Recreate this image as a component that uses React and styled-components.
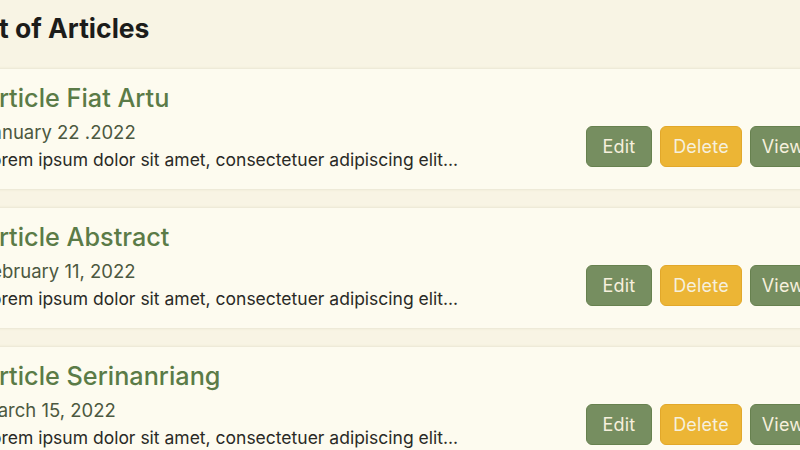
import React from "react";
import styled, { createGlobalStyle } from "styled-components";

const Global = createGlobalStyle`
  html, body { margin: 0; padding: 0; background: #f8f4e4; overflow: hidden; }
  body { font-family: Inter, "Noto Sans", "Liberation Sans", sans-serif; }
`;

const Page = styled.div`
  width: 800px;
  height: 450px;
  overflow: hidden;
  background: #f8f4e4;
`;

const Container = styled.div`
  width: 873px;
  margin-left: -40px;
  padding-top: 12px;
  display: flex;
  flex-direction: column;
`;

const Heading = styled.h1`
  margin: 0 0 23px 2px;
  font-size: 26.5px;
  line-height: 33px;
  font-weight: 700;
  color: #1c1c1a;
`;

const List = styled.div`
  display: flex;
  flex-direction: column;
  gap: 17px;
`;

const Card = styled.div`
  height: 122px;
  box-sizing: border-box;
  background: #fdfbef;
  border: 1px solid #eeead8;
  border-radius: 3px;
  box-shadow: 0 0 3px rgba(120, 110, 70, 0.08);
  padding: 14px 16px 0 20px;
  display: flex;
  align-items: flex-start;
  justify-content: space-between;
`;

const Info = styled.div`
  display: flex;
  flex-direction: column;
`;

const Title = styled.h2`
  margin: 0;
  font-size: 25.25px;
  line-height: 30px;
  font-weight: 500;
  color: #5b7b47;
`;

const DateText = styled.div`
  margin-top: 8px;
  font-size: 18.5px;
  line-height: 22px;
  color: #4c5840;
`;

const Body = styled.p`
  margin: 6px 0 0 0;
  font-size: 17.5px;
  line-height: 22px;
  color: #2a2a26;
`;

const Actions = styled.div`
  display: flex;
  gap: 8px;
  margin-top: 43px;
`;

const Button = styled.button`
  height: 41px;
  width: ${(p) => p.$w}px;
  box-sizing: border-box;
  padding: 0;
  border-radius: 6px;
  border: 1px solid ${(p) => (p.$kind === "warn" ? "#e2a82a" : "#67814f")};
  background: ${(p) => (p.$kind === "warn" ? "#ecb535" : "#768e60")};
  color: #f6f0dd;
  font-family: Inter, "Noto Sans", "Liberation Sans", sans-serif;
  font-size: 18px;
  letter-spacing: 0.2px;
  font-weight: 400;
  cursor: pointer;
`;

const articles = [
  { title: "Article Fiat Artu", date: "January 22 .2022" },
  { title: "Article Abstract", date: "February 11, 2022" },
  { title: "Article Serinanriang", date: "March 15, 2022" },
];

export default function App() {
  return (
    <Page>
      <Global />
      <Container>
        <Heading>List of Articles</Heading>
        <List>
          {articles.map((a) => (
            <Card key={a.title}>
              <Info>
                <Title>{a.title}</Title>
                <DateText>{a.date}</DateText>
                <Body>Lorem ipsum dolor sit amet, consectetuer adipiscing elit...</Body>
              </Info>
              <Actions>
                <Button $w={66}>Edit</Button>
                <Button $w={82} $kind="warn">Delete</Button>
                <Button $w={66}>View</Button>
              </Actions>
            </Card>
          ))}
        </List>
      </Container>
    </Page>
  );
}
